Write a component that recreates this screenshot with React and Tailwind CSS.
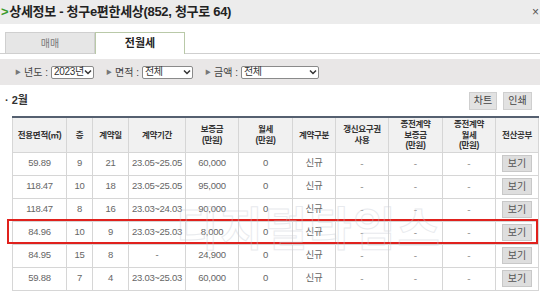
import React from 'react';

const font = { fontFamily: '"Liberation Sans", "Noto Sans CJK KR", sans-serif' };

const cols = [54, 26, 36, 57, 53, 54, 43, 53, 54, 53, 43];

const headers = [
  ['전용면적(㎡)'],
  ['층'],
  ['계약일'],
  ['계약기간'],
  ['보증금', '(만원)'],
  ['월세', '(만원)'],
  ['계약구분'],
  ['갱신요구권', '사용'],
  ['종전계약', '보증금', '(만원)'],
  ['종전계약', '월세', '(만원)'],
  ['전산공부'],
];

const rows = [
  ['59.89', '9', '21', '23.05~25.05', '60,000', '0', '신규'],
  ['118.47', '10', '18', '23.05~25.05', '95,000', '0', '신규'],
  ['118.47', '8', '16', '23.03~24.03', '90,000', '0', '신규'],
  ['84.96', '10', '9', '23.03~25.03', '8,000', '0', '신규'],
  ['84.95', '15', '8', '-', '24,900', '0', '신규'],
  ['59.88', '7', '4', '23.03~25.03', '60,000', '0', '신규'],
];

const Filter = ({ label, value, width }) => (
  <div className="flex items-center gap-[3px] whitespace-nowrap">
    <span className="text-[6px] text-[#777]">▶</span>
    <span className="text-[10px] text-[#444]">{label} :</span>
    <div
      className="h-[13px] bg-white border border-[#8a8a8a] rounded-[2px] flex items-center justify-between pl-[2px] pr-[1px]"
      style={{ width }}
    >
      <span className="text-[10px] text-[#333] leading-none whitespace-nowrap tracking-[-0.3px]">{value}</span>
      <svg width="8" height="6" viewBox="0 0 8 6" className="shrink-0">
        <path d="M1 1.5 L4 4.5 L7 1.5" stroke="#333" strokeWidth="1.5" fill="none" />
      </svg>
    </div>
  </div>
);

const App = () => {
  return (
    <div className="w-[540px] h-[294px] overflow-hidden bg-white relative" style={font}>
      <div className="h-[24px] bg-[#ececec] flex items-center justify-between pl-[1px]">
        <div className="flex items-center text-[13px] font-bold text-[#222] tracking-[-0.3px]">
          <span className="text-[#3a9a2a] font-bold mr-[1px]">&gt;</span>
          <span>상세정보 - 청구e편한세상(852, 청구로 64)</span>
        </div>
        <span className="text-[12px] text-[#555] pr-[1px]">×</span>
      </div>

      <div className="mt-[8px] h-[22px] flex border-b border-[#cfcfcf] pl-[5px]">
        <div className="w-[90px] bg-[#e6e6e6] border border-[#cfcfcf] border-b-0 flex items-center justify-center text-[10px] text-[#777]">
          매매
        </div>
        <div className="w-[90px] bg-white border border-[#b9c9a8] border-b-0 -mb-[1px] flex items-center justify-center text-[11px] font-bold text-[#222]">
          전월세
        </div>
      </div>

      <div className="mt-[5px] h-[26px] bg-[#e9e7e7] flex items-center pl-[15px] gap-[12px]">
        <Filter label="년도" value="2023년" width={43} />
        <Filter label="면적" value="전체" width={51} />
        <Filter label="금액" value="전체" width={78} />
      </div>

      <div className="h-[31px] flex items-center justify-between pl-[5px] pr-[8px]">
        <span className="text-[11px] font-bold text-[#333]">· 2월</span>
        <div className="flex gap-[6px]">
          <div className="w-[28px] h-[18px] bg-[#e2e2e2] border border-[#cfcfcf] flex items-center justify-center text-[10px] text-[#444]">
            차트
          </div>
          <div className="w-[29px] h-[18px] bg-[#e2e2e2] border border-[#cfcfcf] flex items-center justify-center text-[10px] text-[#444]">
            인쇄
          </div>
        </div>
      </div>

      <div className="pl-[12px] relative">
        <table className="border-collapse table-fixed w-[526px] border-t-2 border-t-[#556070]">
          <colgroup>
            {cols.map((w, i) => (
              <col key={i} style={{ width: w }} />
            ))}
          </colgroup>
          <thead>
            <tr className="h-[35px] bg-[#f1f1f1]">
              {headers.map((h, i) => (
                <th
                  key={i}
                  className="border border-[#d6d6d6] border-t-0 text-[8.5px] leading-[10.5px] font-bold text-[#333] p-0 whitespace-nowrap tracking-[-0.3px]"
                >
                  {h.map((l, j) => (
                    <div key={j}>{l}</div>
                  ))}
                </th>
              ))}
            </tr>
          </thead>
          <tbody>
            {rows.map((r, i) => (
              <tr key={i} className="h-[23px]">
                {r.map((c, j) => (
                  <td key={j} className="border border-[#d6d6d6] text-center text-[9.5px] tracking-[-0.3px] text-[#666] p-0 whitespace-nowrap">
                    {c}
                  </td>
                ))}
                <td className="border border-[#d6d6d6] text-center text-[10px] text-[#999] p-0">-</td>
                <td className="border border-[#d6d6d6] text-center text-[10px] text-[#999] p-0">-</td>
                <td className="border border-[#d6d6d6] text-center text-[10px] text-[#999] p-0">-</td>
                <td className="border border-[#d6d6d6] p-0">
                  <div className="mx-auto w-[30px] h-[17px] bg-[#dedede] border border-[#c8c8c8] flex items-center justify-center text-[10px] text-[#555]">
                    보기
                  </div>
                </td>
              </tr>
            ))}
          </tbody>
        </table>
      </div>

      <div className="absolute left-[7px] top-[219px] w-[531px] h-[25px] border-2 border-[#e0211d]"></div>

      <div className="absolute left-[176px] top-[206px] text-[46px] font-bold leading-none tracking-[2px] text-transparent opacity-40 [-webkit-text-stroke:1px_#c8cdd6] pointer-events-none">
        디지털타임스
      </div>
    </div>
  );
};

export default App;
